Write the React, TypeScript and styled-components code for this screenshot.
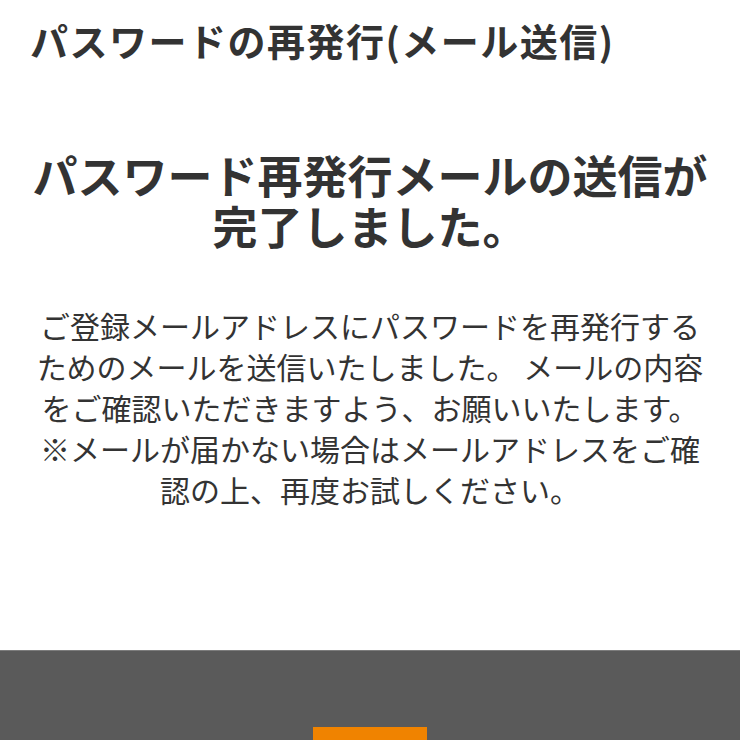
import styled, { createGlobalStyle } from "styled-components";

const GlobalStyle = createGlobalStyle`
    html, body {
        margin: 0;
        padding: 0;
        background: #ffffff;
    }

    body {
        font-family: "Noto Sans CJK JP", "Noto Sans", sans-serif;
        color: #333333;
    }
`;

function App() {
    return (
        <>
            <GlobalStyle />
            <Page>
                <Header>
                    <PageTitle>パスワードの再発行(メール送信)</PageTitle>
                </Header>
                <Content>
                    <Heading>
                        パスワード再発行メールの送信が
                        <br />
                        完了しました。
                    </Heading>
                    <Message>
                        ご登録メールアドレスにパスワードを再発行するためのメールを送信いたしました。 メールの内容をご確認いただきますよう、お願いいたします。
                        <br />
                        ※メールが届かない場合はメールアドレスをご確認の上、再度お試しください。
                    </Message>
                </Content>
                <Footer>
                    <PageTopButton type="button" aria-label="ページトップへ" />
                </Footer>
            </Page>
        </>
    );
}

const Page = styled.div`
    display: flex;
    flex-direction: column;
    min-height: 100vh;
`;

const Header = styled.header`
    padding: 13px 30px 0;
`;

const PageTitle = styled.h1`
    margin: 0;
    font-size: 38px;
    line-height: 54px;
    font-weight: 700;
    color: #333333;
    letter-spacing: 1.5px;
`;

const Content = styled.main`
    padding: 82px 30px 140px;
    display: flex;
    flex-direction: column;
    align-items: center;
`;

const Heading = styled.h2`
    margin: 0;
    font-size: 45px;
    line-height: 51px;
    font-weight: 700;
    text-align: center;
    color: #333333;
`;

const Message = styled.p`
    margin: 54px 0 0;
    width: 680px;
    font-size: 30px;
    line-height: 41px;
    font-weight: 400;
    text-align: center;
    color: #333333;
`;

const Footer = styled.footer`
    flex: 1;
    display: flex;
    justify-content: center;
    align-items: flex-start;
    padding: 76px 0 40px;
    background: #5a5a5a;
    border-top: 1px solid #7c7c7c;
`;

const PageTopButton = styled.button`
    width: 114px;
    height: 60px;
    border: none;
    padding: 0;
    background: #f08300;
    cursor: pointer;
`;

export default App;
